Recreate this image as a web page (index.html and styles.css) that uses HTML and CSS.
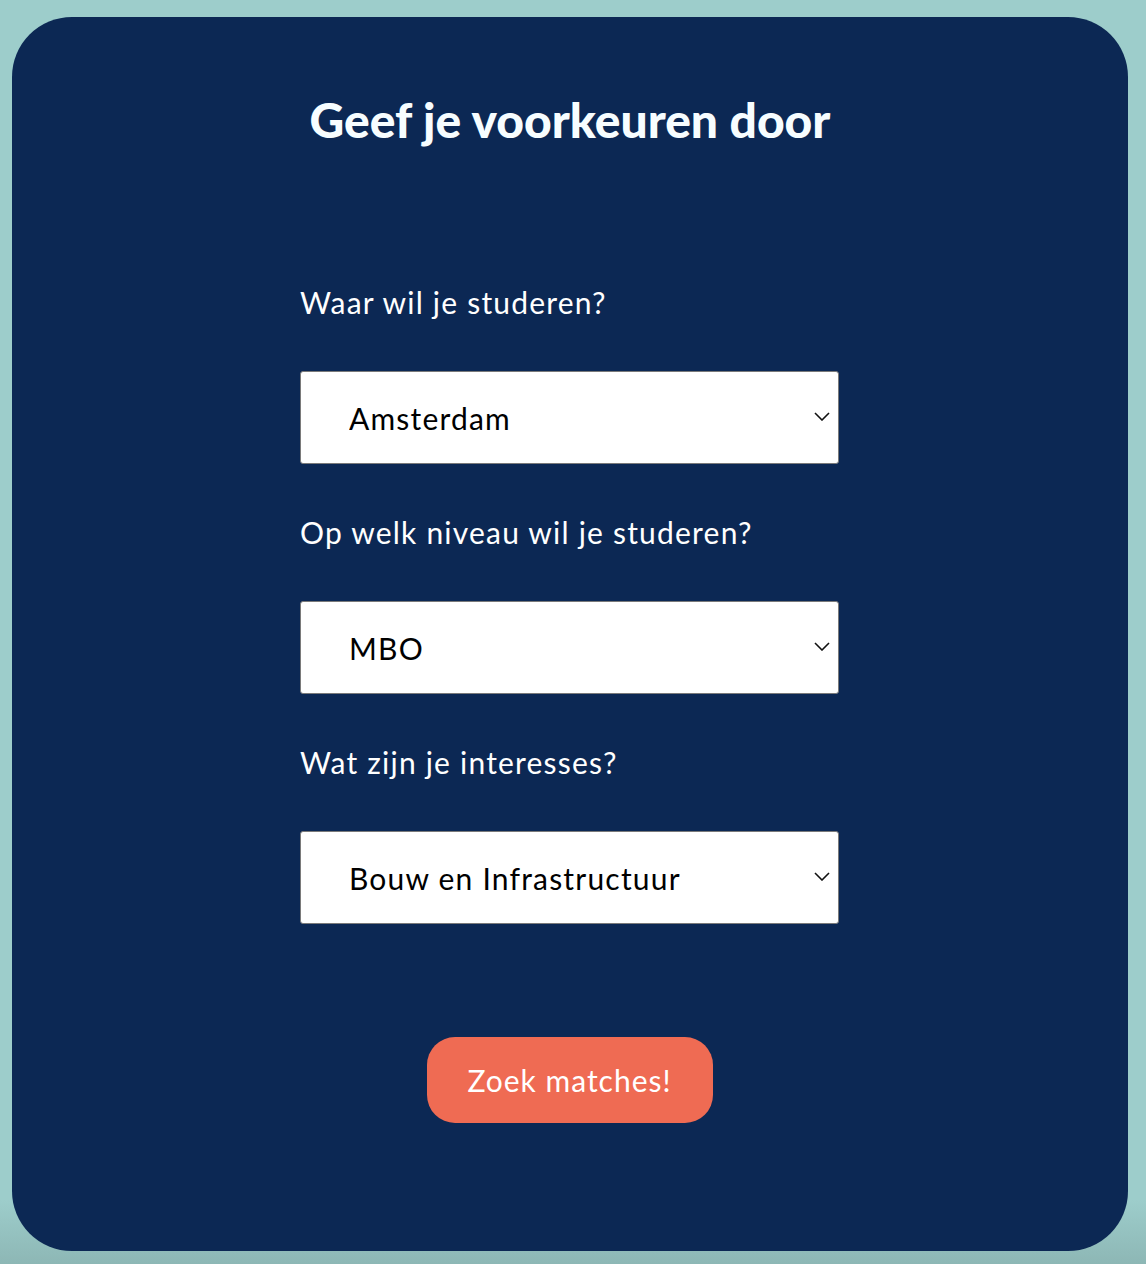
FILE: index.html
```html
<!DOCTYPE html>
<html lang="nl">
<head>
<meta charset="utf-8">
<title>Geef je voorkeuren door</title>
<link rel="stylesheet" href="styles.css">
</head>
<body>
<main class="card">
  <h1 class="title">Geef je voorkeuren door</h1>
  <form class="form">
    <div class="field">
      <label class="label" for="plaats">Waar wil je studeren?</label>
      <div class="select-wrap">
        <select id="plaats" class="select">
          <option>Amsterdam</option>
        </select>
        <svg class="chevron" width="16" height="9" viewBox="0 0 16 9"><path d="M1 1l7 7 7-7" fill="none" stroke="#111" stroke-width="1.6"/></svg>
      </div>
    </div>
    <div class="field">
      <label class="label" for="niveau">Op welk niveau wil je studeren?</label>
      <div class="select-wrap">
        <select id="niveau" class="select">
          <option>MBO</option>
        </select>
        <svg class="chevron" width="16" height="9" viewBox="0 0 16 9"><path d="M1 1l7 7 7-7" fill="none" stroke="#111" stroke-width="1.6"/></svg>
      </div>
    </div>
    <div class="field">
      <label class="label" for="interesse">Wat zijn je interesses?</label>
      <div class="select-wrap">
        <select id="interesse" class="select">
          <option>Bouw en Infrastructuur</option>
        </select>
        <svg class="chevron" width="16" height="9" viewBox="0 0 16 9"><path d="M1 1l7 7 7-7" fill="none" stroke="#111" stroke-width="1.6"/></svg>
      </div>
    </div>
    <div class="actions">
      <button type="button" class="button">Zoek matches!</button>
    </div>
  </form>
</main>
</body>
</html>
```
FILE: styles.css
```css
* { box-sizing: border-box; }
html, body { margin: 0; }
body {
  width: 1146px;
  height: 1264px;
  background: linear-gradient(to bottom, #9dcdcb 0, #9dcdcb 1200px, #8db7b5 1264px);
  padding: 17px 18px 0 12px;
  font-family: Lato, "Open Sans", sans-serif;
  overflow: hidden;
}
.card {
  background: #0c2854;
  border-radius: 60px;
  height: 1234px;
  padding: 73px 0 0;
  display: flex;
  flex-direction: column;
  align-items: center;
}
.title {
  margin: 0;
  color: #f7fdff;
  font-size: 48px;
  font-weight: 900;
  line-height: 60px;
  letter-spacing: 0;
}
.form {
  width: 539px;
  margin-top: 132px;
  margin-left: -1px;
  display: flex;
  flex-direction: column;
  gap: 48px;
}
.field {
  display: flex;
  flex-direction: column;
}
.label {
  color: #ffffff;
  font-size: 30px;
  letter-spacing: 1.2px;
  line-height: 40px;
  margin-bottom: 49px;
}
.select-wrap {
  position: relative;
  height: 93px;
}
.select {
  appearance: none;
  -webkit-appearance: none;
  width: 100%;
  height: 100%;
  background: #ffffff;
  border: 1.5px solid #7a7a7a;
  border-radius: 3px;
  padding: 0 60px 0 48px;
  font-family: Lato, "Open Sans", sans-serif;
  font-size: 30px;
  letter-spacing: 1.2px;
  color: #000;
}
.chevron {
  position: absolute;
  right: 9px;
  top: 41px;
  pointer-events: none;
}
.actions {
  display: flex;
  justify-content: center;
  margin-top: 65px;
}
.button {
  width: 286px;
  height: 86px;
  border: none;
  border-radius: 28px;
  background: #ef6b53;
  color: #ffffff;
  font-family: Lato, "Open Sans", sans-serif;
  font-size: 30px;
  letter-spacing: 1px;
  cursor: pointer;
}
```
